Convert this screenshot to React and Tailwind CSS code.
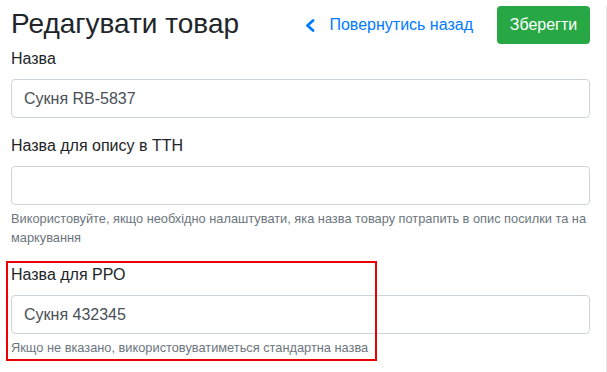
function Field({ label, value, help, children }) {
  return (
    <div className="mb-4">
      <label className="block mb-2 text-base leading-6 text-[#212529]">{label}</label>
      {children || (
        <input
          type="text"
          defaultValue={value}
          className="block w-full h-[39px] px-3 rounded border border-[#ced4da] bg-white text-base text-[#495057] outline-none"
        />
      )}
      {help && <p className="mt-1 text-[12.8px] leading-[19.2px] text-[#6c757d]">{help}</p>}
    </div>
  );
}

export default function App() {
  return (
    <div
      className="min-h-[372px] w-[607px] bg-white pl-[11px] pr-[16px] border-r border-[#e5e7eb]"
      style={{ fontFamily: '"Liberation Sans", Arial, sans-serif' }}
    >
      {/* Header */}
      <div className="flex items-center h-[38px] mt-[6px] mb-[3px]">
        <h2 className="text-[28px] leading-[34px] text-[#212529] -mt-[2px]">Редагувати товар</h2>
        <a href="#" className="ml-auto flex items-center text-base text-[#007bff]">
          <svg width="10" height="13" viewBox="0 0 10 13" className="mr-[14px]">
            <path d="M8 1.5 L2.5 6.5 L8 11.5" fill="none" stroke="#007bff" strokeWidth="2.8" strokeLinecap="round" strokeLinejoin="round" />
          </svg>
          Повернутись назад
        </a>
        <button className="ml-[24px] h-[38px] w-[93px] rounded bg-[#28a745] text-base text-white">
          Зберегти
        </button>
      </div>

      <Field label="Назва" value="Сукня RB-5837" />

      <Field
        label="Назва для опису в ТТН"
        value=""
        help="Використовуйте, якщо необхідно налаштувати, яка назва товару потрапить в опис посилки та на маркування"
      />

      {/* Highlighted field */}
      <div className="relative">
        <div className="absolute left-[-5px] top-[-2px] w-[371px] h-[100px] border-2 border-[#ee0000] pointer-events-none" />
        <Field
          label="Назва для РРО"
          value="Сукня 432345"
          help="Якщо не вказано, використовуватиметься стандартна назва"
        />
      </div>
    </div>
  );
}
